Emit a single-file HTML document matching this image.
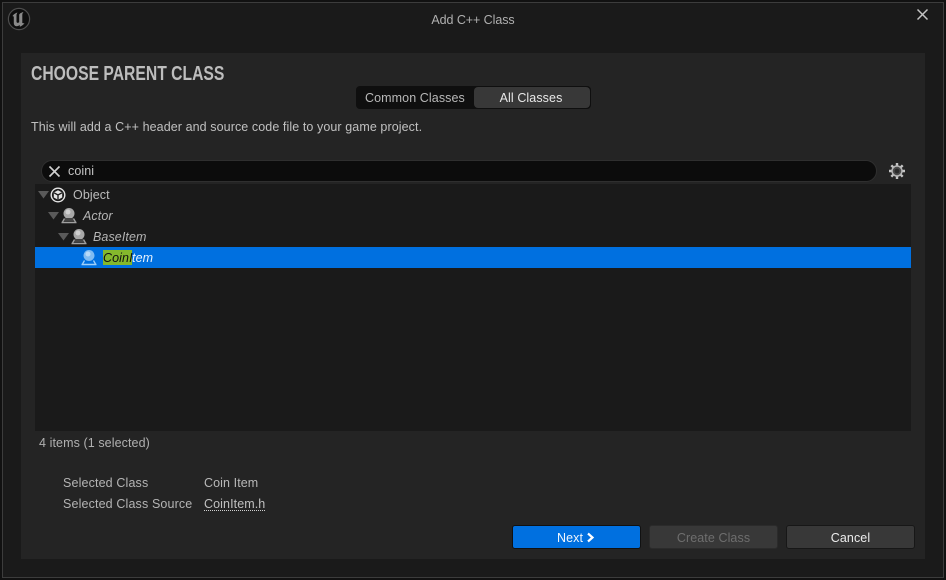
<!DOCTYPE html>
<html><head><meta charset="utf-8"><style>
html,body{margin:0;padding:0;background:#0c0c0c;}
#r{position:relative;width:946px;height:580px;overflow:hidden;background:#111;font-family:"Liberation Sans",sans-serif;font-size:12.5px;letter-spacing:.09px;color:#c0c0c0;}
#r div{position:absolute;}
.t{white-space:nowrap;line-height:16px;}
</style></head><body><div id="r">
<div style="left:2px;top:2px;width:940px;height:574px;border:1px solid #3c3c3c;background:#1a1a1a"></div>
<svg style="position:absolute;left:7px;top:7px" width="24" height="24" viewBox="0 0 24 24"><circle cx="12" cy="12" r="10.6" fill="#0e0e0e" stroke="#4e4e4e" stroke-width="1.2"/><path d="M5.500 9C7 7 8.500 6 10.500 5.500C9.800 6.500 9.500 7.200 9.500 8.500V14.500C9.500 16 11 16.200 12.200 15.300V8C12.200 6.800 13.800 5.700 16.500 5C15.700 6 15.300 6.800 15.300 8V16L17.500 16.500C16 18 14.300 19.200 12.800 19.700V18C11 19.500 8.500 19.700 7.500 18.300C6.900 17.500 6.800 16.500 6.800 15.500V9.500C6.300 9.500 5.900 9.300 5.500 9Z" fill="#8a8a8a"/></svg>
<div class="t" style="left:0;width:946px;top:12px;text-align:center;color:#b0b0b0;letter-spacing:-.07px">Add C++ Class</div>
<svg style="position:absolute;left:916px;top:8px" width="13" height="13" viewBox="0 0 13 13"><path d="M1.500 1.500L11.500 11.500M11.500 1.500L1.500 11.500" stroke="#c4c4c4" stroke-width="1.500"/></svg>

<div style="left:21px;top:53px;width:904px;height:506px;background:#242424"></div>
<div class="t" style="left:31px;top:64px;font-size:20px;line-height:20px;font-weight:bold;letter-spacing:0;color:#bdbdbd;transform:scaleX(.785);transform-origin:0 0">CHOOSE PARENT CLASS</div>

<div style="left:356px;top:86px;width:235px;height:23px;background:#0f0f0f;border-radius:4px"></div>
<div style="left:474px;top:87px;width:116px;height:21px;background:#383838;border-radius:4px"></div>
<div class="t" style="left:365px;top:90px;color:#b8b8b8">Common Classes</div>
<div class="t" style="left:473px;width:116px;top:90px;text-align:center;color:#e8e8e8">All Classes</div>

<div class="t" style="left:31px;top:119px;color:#c0c0c0">This will add a C++ header and source code file to your game project.</div>

<div style="left:41px;top:160px;width:834px;height:20px;background:#0c0c0c;border:1px solid #2f2f2f;border-radius:11px"></div>
<svg style="position:absolute;left:48px;top:165px" width="13" height="13" viewBox="0 0 13 13"><path d="M1.500 1.500L11.500 11.500M11.500 1.500L1.500 11.500" stroke="#d0d0d0" stroke-width="1.600"/></svg>
<div class="t" style="left:68px;top:163px;color:#c4c4c4">coini</div>
<svg style="position:absolute;left:888px;top:162px" width="18" height="18" viewBox="0 0 18 18"><g stroke="#c4c4c4" stroke-width="2.400"><path d="M9 1V17M1 9H17M3.300 3.300L14.700 14.700M14.700 3.300L3.300 14.700"/></g><circle cx="9" cy="9" r="5" fill="#4a4a4a" stroke="#b4b4b4" stroke-width="1.500"/><circle cx="9" cy="9" r="2.400" fill="#2a2a2a"/></svg>

<div style="left:35px;top:184px;width:876px;height:247px;background:#1a1a1a"></div>
<div style="left:35px;top:247px;width:876px;height:21px;background:#0070e0"></div>

<svg style="position:absolute;left:38px;top:191px" width="11" height="8"><path d="M0 0H11L5.500 7.500Z" fill="#5a5a5a"/></svg>
<svg style="position:absolute;left:48px;top:212px" width="11" height="8"><path d="M0 0H11L5.500 7.500Z" fill="#5a5a5a"/></svg>
<svg style="position:absolute;left:58px;top:233px" width="11" height="8"><path d="M0 0H11L5.500 7.500Z" fill="#5a5a5a"/></svg>

<svg style="position:absolute;left:50px;top:187px" width="16" height="16" viewBox="0 0 16 16"><circle cx="8" cy="8" r="6.800" fill="#1a1a1a" stroke="#e4e4e4" stroke-width="1.400"/><path d="M8 3.200L12.200 5.500V10.500L8 12.800L3.800 10.500V5.500Z" fill="#e4e4e4"/><path d="M4 5.800L8 8L12 5.800M8 8V12.500" stroke="#1a1a1a" stroke-width="1.300" fill="none"/></svg>

<svg style="position:absolute;left:60px;top:207px" width="18" height="17" viewBox="0 0 18 17"><circle cx="9" cy="6.500" r="5.500" fill="#a8a8a8"/><circle cx="8" cy="5" r="2.500" fill="#cfcfcf"/><path d="M5 11L4 14H14L13 11" fill="#444"/><path d="M1.500 15.500H16.500" stroke="#a0a0a0" stroke-width="1.500"/><path d="M4.500 11.500L2.500 15M13.500 11.500L15.500 15" stroke="#a0a0a0" stroke-width="1.300"/></svg>
<svg style="position:absolute;left:70px;top:228px" width="18" height="17" viewBox="0 0 18 17"><circle cx="9" cy="6.500" r="5.500" fill="#a8a8a8"/><circle cx="8" cy="5" r="2.500" fill="#cfcfcf"/><path d="M5 11L4 14H14L13 11" fill="#444"/><path d="M1.500 15.500H16.500" stroke="#a0a0a0" stroke-width="1.500"/><path d="M4.500 11.500L2.500 15M13.500 11.500L15.500 15" stroke="#a0a0a0" stroke-width="1.300"/></svg>
<svg style="position:absolute;left:80px;top:249px" width="18" height="17" viewBox="0 0 18 17"><circle cx="9" cy="6.500" r="5.500" fill="#80bcf2"/><circle cx="8" cy="5" r="2.500" fill="#b8daf8"/><path d="M1.500 15.500H16.500" stroke="#a0d0f8" stroke-width="1.500"/><path d="M4.500 11.500L2.500 15M13.500 11.500L15.500 15" stroke="#a0d0f8" stroke-width="1.300"/></svg>

<div class="t" style="left:73px;top:187px;color:#bcbcbc">Object</div>
<div class="t" style="left:83px;top:208px;color:#b4b4b4;font-style:italic">Actor</div>
<div class="t" style="left:93px;top:229px;color:#b4b4b4;font-style:italic">BaseItem</div>
<div style="left:103px;top:250px;width:29px;height:15px;background:#84b82c"></div>
<div class="t" style="left:103px;top:250px;color:#111;font-style:italic">CoinI</div>
<div class="t" style="left:132px;top:250px;color:#e8f2fc;font-style:italic">tem</div>

<div class="t" style="left:39px;top:435px;color:#b0b0b0">4 items (1 selected)</div>
<div class="t" style="left:63px;top:475px;color:#b4b4b4;letter-spacing:.14px">Selected Class</div>
<div class="t" style="left:63px;top:496px;color:#b4b4b4;letter-spacing:.14px">Selected Class Source</div>
<div class="t" style="left:204px;top:475px;color:#b8b8b8">Coin Item</div>
<div class="t" style="left:204px;top:496px;color:#c0c0c0">CoinItem.h</div>
<div style="left:204px;top:510px;width:61px;height:0;border-top:1px dotted #d0d0d0"></div>

<div style="left:512px;top:525px;width:127px;height:22px;background:#0070e0;border:1px solid #111;border-radius:3px"></div>
<div class="t" style="left:557px;top:530px;color:#f0f6fc">Next</div>
<svg style="position:absolute;left:586px;top:532px" width="9" height="11" viewBox="0 0 9 11"><path d="M2 1.500L6.500 5.500L2 9.500" fill="none" stroke="#fff" stroke-width="2.200"/></svg>
<div style="left:649px;top:525px;width:127px;height:22px;background:#383838;border:1px solid #2b2b2b;border-radius:3px"></div>
<div class="t" style="left:649px;width:129px;top:530px;text-align:center;color:#6e6e6e">Create Class</div>
<div style="left:786px;top:525px;width:127px;height:22px;background:#383838;border:1px solid #171717;border-radius:3px"></div>
<div class="t" style="left:786px;width:129px;top:530px;text-align:center;color:#ececec">Cancel</div>
</div></body></html>
